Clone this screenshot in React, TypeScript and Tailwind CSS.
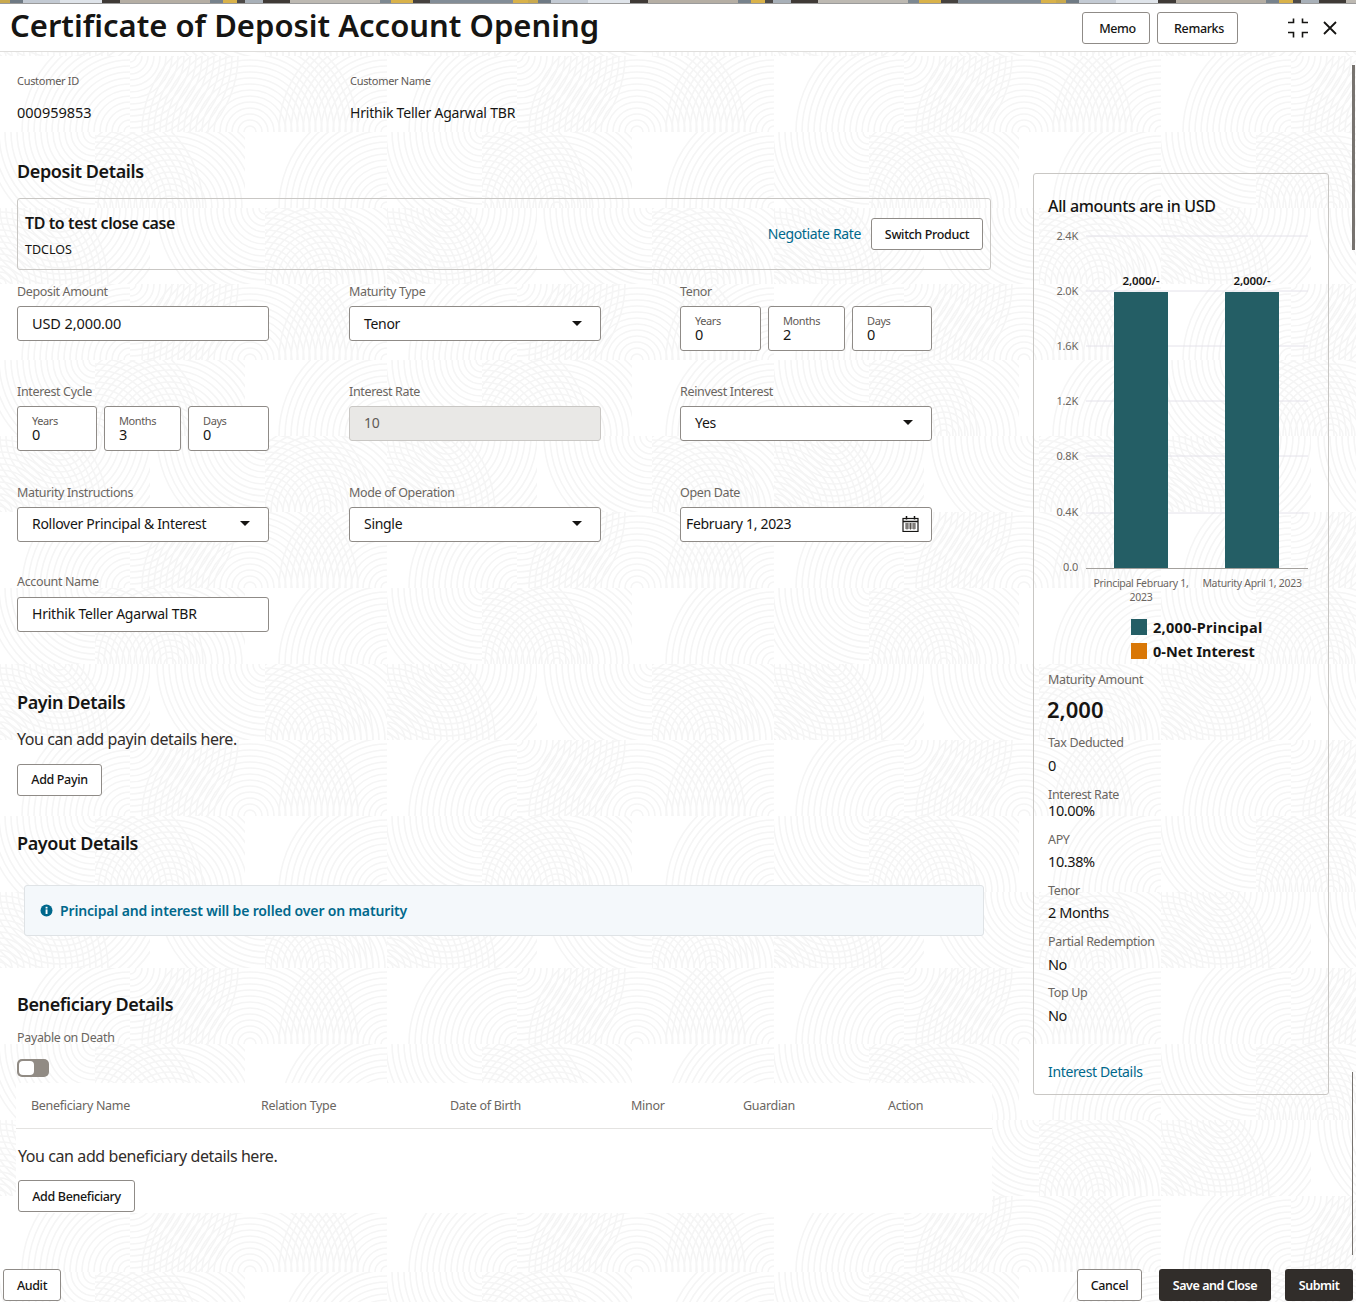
import React from "react";

const cells = [
  { x: 0, y: 0, w: 130, h: 76, c: [[130, 76]] },
  { x: 130, y: 0, w: 120, h: 76, c: [[130, 0], [250, 76]] },
  { x: 250, y: 0, w: 137, h: 76, c: [[250, 76], [387, 76]] },
  { x: 0, y: 76, w: 95, h: 76, c: [[95, 76]] },
  { x: 95, y: 76, w: 150, h: 76, c: [[170, 152], [95, 152]] },
  { x: 245, y: 76, w: 142, h: 76, c: [[387, 152]] },
  { x: 0, y: 152, w: 150, h: 76, c: [[0, 228], [60, 152]] },
  { x: 150, y: 152, w: 115, h: 76, c: [[265, 152]] },
  { x: 265, y: 152, w: 122, h: 76, c: [[325, 228], [265, 228]] },
];
const radii = Array.from({ length: 18 }, (_, i) => 6 + i * 6);

function Pattern() {
  return (
    <svg className="absolute inset-0 w-full h-full" aria-hidden="true">
      <defs>
        {cells.map((k, i) => (
          <clipPath id={`cell${i}`} key={i}>
            <rect x={k.x} y={k.y} width={k.w} height={k.h} />
          </clipPath>
        ))}
        <pattern id="prints" x="0" y="4" width="387" height="228" patternUnits="userSpaceOnUse">
          {cells.map((k, i) => (
            <g key={i} clipPath={`url(#cell${i})`} fill="none" stroke="#f5f5f5" strokeWidth="1.6">
              {k.c.map((p, j) =>
                radii.map((r) => <circle key={`${j}-${r}`} cx={p[0]} cy={p[1]} r={r} />)
              )}
            </g>
          ))}
        </pattern>
      </defs>
      <rect width="100%" height="100%" fill="url(#prints)" />
    </svg>
  );
}

function Strip() {
  const segs: [number, number, string][] = [
    [0, 10, "#c9a94e"],
    [10, 23, "#6f7a84"],
    [23, 60, "#c3cad3"],
    [60, 102, "#dfe4ea"],
    [102, 120, "#3f3a36"],
    [120, 210, "#b5aea4"],
    [210, 223, "#77828c"],
    [223, 237, "#d9b24a"],
    [237, 245, "#4d4a48"],
    [245, 263, "#a8b0b8"],
    [263, 290, "#3f3a36"],
    [290, 380, "#bdb9b2"],
    [380, 391, "#7d8891"],
    [391, 413, "#d9b24a"],
    [413, 430, "#46423f"],
    [430, 513, "#838d97"],
    [513, 528, "#d9b24a"],
  ];
  return (
    <svg className="block w-full h-[4px]" aria-hidden="true">
      <defs>
        <pattern id="strip" width="528" height="4" patternUnits="userSpaceOnUse">
          {segs.map(([a, b, c]) => (
            <rect key={a} x={a} width={b - a} height="4" fill={c} />
          ))}
        </pattern>
      </defs>
      <rect width="100%" height="3" fill="url(#strip)" />
      <rect y="3" width="100%" height="1" fill="#9b9b9b" />
    </svg>
  );
}

function Label({ children, cls = "" }: { children: React.ReactNode; cls?: string }) {
  return <div className={`h-5 leading-5 text-[12.5px] tracking-[-0.35px] text-[#6b6661] ${cls}`}>{children}</div>;
}

function Heading({ children, cls = "" }: { children: React.ReactNode; cls?: string }) {
  return <div className={`h-7 leading-[26px] text-[18px] font-semibold text-[#161513] tracking-[-0.4px] ${cls}`}>{children}</div>;
}

function Caret() {
  return (
    <svg width="10" height="5" viewBox="0 0 10 5" className="shrink-0">
      <path d="M0 0H10L5 5Z" fill="#161513" />
    </svg>
  );
}

function Box({ children, cls = "" }: { children: React.ReactNode; cls?: string }) {
  return (
    <div className={`h-[35px] w-[252px] rounded-[3px] border border-[#8f8b87] bg-white flex items-center text-[14px] tracking-[-0.3px] text-[#161513] ${cls}`}>
      {children}
    </div>
  );
}

function Select({ value, cls = "" }: { value: string; cls?: string }) {
  return (
    <Box cls={`pl-[14px] pr-[18px] justify-between ${cls}`}>
      <span>{value}</span>
      <Caret />
    </Box>
  );
}

function Mini({ label, value, cls }: { label: string; value: string; cls: string }) {
  return (
    <div className={`h-[45px] rounded-[3px] border border-[#8f8b87] bg-white pl-[14px] pt-[7px] ${cls}`}>
      <div className="text-[11px] leading-[13px] tracking-[-0.4px] text-[#5f5a56]">{label}</div>
      <div className="text-[14.5px] leading-[14px] text-[#161513]">{value}</div>
    </div>
  );
}

function Btn({ children, cls = "" }: { children: React.ReactNode; cls?: string }) {
  return (
    <button className={`h-[32px] rounded-[3px] border border-[#8f8b87] bg-white pt-px text-[12.5px] font-medium tracking-[-0.35px] text-[#161513] flex items-center justify-center ${cls}`}>
      {children}
    </button>
  );
}

function DarkBtn({ children, cls = "" }: { children: React.ReactNode; cls?: string }) {
  return (
    <button className={`h-[32px] rounded-[3px] bg-[#312d2a] pt-[2px] text-[12.5px] font-semibold tracking-[-0.45px] text-white flex items-center justify-center ${cls}`}>
      {children}
    </button>
  );
}

function Chart() {
  const ys: [number, string, number][] = [
    [11, "2.4K", 15],
    [66, "2.0K", 70],
    [121, "1.6K", 125],
    [176, "1.2K", 180],
    [231, "0.8K", 235],
    [288, "0.4K", 291],
  ];
  return (
    <svg width="295" height="385" viewBox="0 0 295 385" className="block mt-[7px] -ml-[14px]">
      {ys.map(([y, t, ty]) => (
        <g key={t}>
          <line x1="52" x2="274" y1={y} y2={y} stroke="#e4e2ea" />
          <text x="44" y={ty} textAnchor="end" fontSize="11" letterSpacing="-0.2" fill="#6b6661">{t}</text>
        </g>
      ))}
      <text x="44" y="346" textAnchor="end" fontSize="11" letterSpacing="-0.2" fill="#6b6661">0.0</text>
      <rect x="80" y="67" width="54" height="276" fill="#245e65" />
      <rect x="191" y="67" width="54" height="276" fill="#245e65" />
      <line x1="52" x2="274" y1="343.5" y2="343.5" stroke="#a3a09c" />
      <text x="107" y="60" textAnchor="middle" fontSize="11.5" fontWeight="600" letterSpacing="-0.1" fill="#161513">2,000/-</text>
      <text x="218" y="60" textAnchor="middle" fontSize="11.5" fontWeight="600" letterSpacing="-0.1" fill="#161513">2,000/-</text>
      <text x="107" y="362" textAnchor="middle" fontSize="10.5" letterSpacing="-0.3" fill="#6b6661">Principal February 1,</text>
      <text x="107" y="376" textAnchor="middle" fontSize="10.5" letterSpacing="-0.3" fill="#6b6661">2023</text>
      <text x="218" y="362" textAnchor="middle" fontSize="10.5" letterSpacing="-0.3" fill="#6b6661">Maturity April 1, 2023</text>
    </svg>
  );
}

function Stat({ label, value, lc = "", vc = "" }: { label: string; value: string; lc?: string; vc?: string }) {
  return (
    <>
      <Label cls={lc}>{label}</Label>
      <div className={`h-6 leading-[22px] text-[14.5px] tracking-[-0.4px] text-[#161513] ${vc}`}>{value}</div>
    </>
  );
}

const Link = ({ children, cls = "" }: { children: React.ReactNode; cls?: string }) => (
  <div className={`text-[14px] tracking-[-0.35px] text-[#00688c] ${cls}`}>{children}</div>
);

export default function App() {
  return (
    <div className="relative h-[1302px] w-full overflow-hidden bg-white flex flex-col [font-family:'Noto_Sans','Open_Sans',sans-serif]">
      <Strip />
      <header className="relative z-10 h-[48px] shrink-0 bg-white border-b border-[#dfdedc] flex items-center pl-[10px] pr-[19px]">
        <h1 className="text-[31px] leading-[44px] font-semibold text-[#161513] -mt-[6px]">
          Certificate of Deposit Account Opening
        </h1>
        <div className="ml-auto flex items-center">
          <Btn cls="w-[68px] !pt-[3px] pl-[3px]">Memo</Btn>
          <Btn cls="w-[81px] ml-[7px] !pt-[3px] pl-[3px]">Remarks</Btn>
          <svg width="20" height="20" viewBox="0 0 20 20" className="ml-[50px]" fill="none" stroke="#161513" strokeWidth="1.6">
            <path d="M0 4.5H5.5V0.5M14.5 0.5V4.5H20M0 14.5H5.5V19.5M14.5 19.5V14.5H20" />
          </svg>
          <svg width="14" height="14" viewBox="0 0 14 14" className="ml-[15px]" fill="none" stroke="#161513" strokeWidth="1.8">
            <path d="M1 1L13 13M13 1L1 13" />
          </svg>
        </div>
      </header>

      <div className="relative flex-1 flex flex-col min-h-0">
        <Pattern />
        <main className="relative flex flex-1 min-h-0">
          <section className="w-[1033px] shrink-0 pl-[17px] pt-[19px]">
            <div className="grid grid-cols-[333px_1fr]">
              <div>
                <div className="h-5 leading-5 text-[11px] tracking-[-0.3px] text-[#5f5a56]">Customer ID</div>
                <div className="h-6 leading-[22px] mt-[10px] text-[14.5px] text-[#161513]">000959853</div>
              </div>
              <div>
                <div className="h-5 leading-5 text-[11px] tracking-[-0.3px] text-[#5f5a56]">Customer Name</div>
                <div className="h-6 leading-6 mt-[10px] text-[14px] tracking-[-0.2px] text-[#161513]">Hrithik Teller Agarwal TBR</div>
              </div>
            </div>

            <Heading cls="mt-[33px]">Deposit Details</Heading>
            <div className="mt-[12px] h-[72px] w-[974px] rounded-[3px] border border-[#c9c7c4] flex items-center justify-between pl-[7px] pr-[7px]">
              <div className="mt-[3px]">
                <div className="h-6 leading-6 text-[16px] font-semibold text-[#161513] tracking-[-0.4px]">TD to test close case</div>
                <div className="h-5 leading-5 mt-[5px] text-[12.5px] text-[#161513]">TDCLOS</div>
              </div>
              <div className="flex items-center">
                <Link cls="mr-[10px] -mt-px">Negotiate Rate</Link>
                <Btn cls="w-[112px] !pt-[2px]">Switch Product</Btn>
              </div>
            </div>

            <div className="mt-[12px] grid grid-cols-[332px_331px_252px]">
              <div className="h-[100px]">
                <Label cls="mb-1">Deposit Amount</Label>
                <Box cls="pl-[14px] !tracking-[-0.1px] !text-[14.5px]">USD 2,000.00</Box>
              </div>
              <div>
                <Label cls="mb-1">Maturity Type</Label>
                <Select value="Tenor" />
              </div>
              <div>
                <Label cls="mb-1">Tenor</Label>
                <div className="flex gap-[7px]">
                  <Mini label="Years" value="0" cls="w-[81px]" />
                  <Mini label="Months" value="2" cls="w-[77px]" />
                  <Mini label="Days" value="0" cls="w-[80px]" />
                </div>
              </div>

              <div className="h-[101px]">
                <Label cls="mb-1">Interest Cycle</Label>
                <div className="flex gap-[7px] w-[252px]">
                  <Mini label="Years" value="0" cls="w-[80px]" />
                  <Mini label="Months" value="3" cls="w-[77px]" />
                  <Mini label="Days" value="0" cls="w-[81px]" />
                </div>
              </div>
              <div>
                <Label cls="mb-1">Interest Rate</Label>
                <Box cls="!bg-[#e9e8e6] !border-[#c9c7c4] pl-[14px] pb-[2px] !text-[#5f5a56]">10</Box>
              </div>
              <div>
                <Label cls="mb-1">Reinvest Interest</Label>
                <Select value="Yes" cls="pb-[2px]" />
              </div>

              <div className="h-[89px]">
                <Label cls="mb-1">Maturity Instructions</Label>
                <Select value="Rollover Principal & Interest" cls="pb-[2px]" />
              </div>
              <div>
                <Label cls="mb-1">Mode of Operation</Label>
                <Select value="Single" cls="pb-[2px]" />
              </div>
              <div>
                <Label cls="mb-1">Open Date</Label>
                <Box cls="pl-[5px] pr-[12px] pb-[2px] justify-between">
                  <span>February 1, 2023</span>
                  <svg width="17" height="16" viewBox="0 0 17 16" fill="none" stroke="#161513">
                    <rect x="1" y="2.5" width="15" height="13" strokeWidth="1.2" />
                    <path d="M1 5.5H16" strokeWidth="1.5" />
                    <path d="M4.5 0V3.5M12.5 0V3.5" strokeWidth="1.5" />
                    <path d="M3 8H14M3 10H14M3 12H14M5 7V13.5M8.5 7V13.5M12 7V13.5" strokeWidth="1" stroke="#55514d" />
                  </svg>
                </Box>
              </div>
            </div>

            <Label cls="mb-[5px]">Account Name</Label>
            <Box cls="pl-[14px] pb-[2px] !tracking-[-0.22px]">Hrithik Teller Agarwal TBR</Box>

            <Heading cls="mt-[57px]">Payin Details</Heading>
            <div className="mt-[11px] h-6 leading-[23px] text-[16px] text-[#312d2a] tracking-[-0.42px]">You can add payin details here.</div>
            <Btn cls="mt-[12px] w-[85px]">Add Payin</Btn>

            <Heading cls="mt-[34px]">Payout Details</Heading>
            <div className="mt-[27px] ml-[7px] h-[51px] w-[960px] rounded-[3px] border border-[#dfe3e6] bg-[#f4f8fb] flex items-center pl-[15px]">
              <svg width="13" height="13" viewBox="0 0 13 13">
                <circle cx="6.5" cy="6.5" r="6" fill="#00688c" />
                <rect x="5.6" y="5.4" width="1.9" height="4.6" fill="#fff" />
                <rect x="5.6" y="2.8" width="1.9" height="1.7" fill="#fff" />
              </svg>
              <span className="ml-[7px] text-[14px] font-semibold tracking-[-0.15px] text-[#00688c]">Principal and interest will be rolled over on maturity</span>
            </div>

            <Heading cls="mt-[55px]">Beneficiary Details</Heading>
            <Label cls="mt-[9px]">Payable on Death</Label>
            <div className="mt-[11px] h-[18px] w-[32px] rounded-[5px] bg-[#918b84] p-[2px]">
              <div className="h-[14px] w-[15px] rounded-[4px] bg-white" />
            </div>

            <div className="relative mt-[6px] -ml-px w-[976px] h-[130px] bg-white">
              <div className="h-[46px] border-b border-[#e4e3e1] pl-[15px] pt-[2px] grid grid-cols-[230px_189px_181px_112px_145px_1fr] items-center text-[12.5px] tracking-[-0.3px] text-[#6b6661]">
                <div>Beneficiary Name</div>
                <div>Relation Type</div>
                <div>Date of Birth</div>
                <div>Minor</div>
                <div>Guardian</div>
                <div>Action</div>
              </div>
              <div className="mt-[15px] ml-[2px] h-6 leading-6 text-[16px] text-[#312d2a] tracking-[-0.42px]">You can add beneficiary details here.</div>
              <Btn cls="mt-[12px] ml-[2px] w-[117px] !pt-[2px]">Add Beneficiary</Btn>
            </div>
          </section>

          <aside className="relative mt-[121px] w-[296px] h-[922px] shrink-0 rounded-[3px] border border-[#c9c7c4] pl-[14px] pt-[20px]">
            <div className="h-6 leading-6 text-[16px] font-medium text-[#161513] tracking-[-0.35px]">All amounts are in USD</div>
            <Chart />
            <div className="mt-[9px] ml-[83px] flex flex-col gap-[8px]">
              <div className="flex items-center h-4">
                <span className="h-4 w-4 bg-[#245e65]" />
                <span className="ml-[6px] mt-px text-[14.5px] tracking-[0.3px] font-bold text-[#161513]">2,000-Principal</span>
              </div>
              <div className="flex items-center h-4">
                <span className="h-4 w-4 bg-[#d97706]" />
                <span className="ml-[6px] mt-px text-[14.5px] font-bold text-[#161513]">0-Net Interest</span>
              </div>
            </div>
            <Label cls="mt-[11px]">Maturity Amount</Label>
            <div className="mt-[4px] -ml-px h-8 leading-[30px] text-[22px] font-semibold text-[#161513]">2,000</div>
            <Stat label="Tax Deducted" value="0" lc="mt-[7px]" vc="mt-[1px]" />
            <Stat label="Interest Rate" value="10.00%" lc="mt-[7px]" vc="-mt-[6px]" />
            <Stat label="APY" value="10.38%" lc="mt-[7px]" />
            <Stat label="Tenor" value="2 Months" lc="mt-[7px]" />
            <Stat label="Partial Redemption" value="No" lc="mt-[7px]" vc="mt-[1px]" />
            <Stat label="Top Up" value="No" lc="mt-[6px]" vc="mt-[1px]" />
            <Link cls="mt-[32px] h-6 leading-6">Interest Details</Link>
          </aside>
        </main>

        <footer className="relative h-[32px] mb-px shrink-0 flex items-center pl-[3px] pr-[3px]">
          <Btn cls="w-[58px] !pt-[2px]">Audit</Btn>
          <Btn cls="w-[65px] ml-auto !pt-[2px]">Cancel</Btn>
          <DarkBtn cls="w-[112px] ml-[17px]">Save and Close</DarkBtn>
          <DarkBtn cls="w-[68px] ml-[14px]">Submit</DarkBtn>
        </footer>

        <div className="absolute right-px top-[13px] h-[185px] w-[3px] bg-[#77736f]" />
        <div className="absolute right-[3px] top-[1020px] h-[183px] w-px bg-[#77736f]" />
      </div>
    </div>
  );
}
